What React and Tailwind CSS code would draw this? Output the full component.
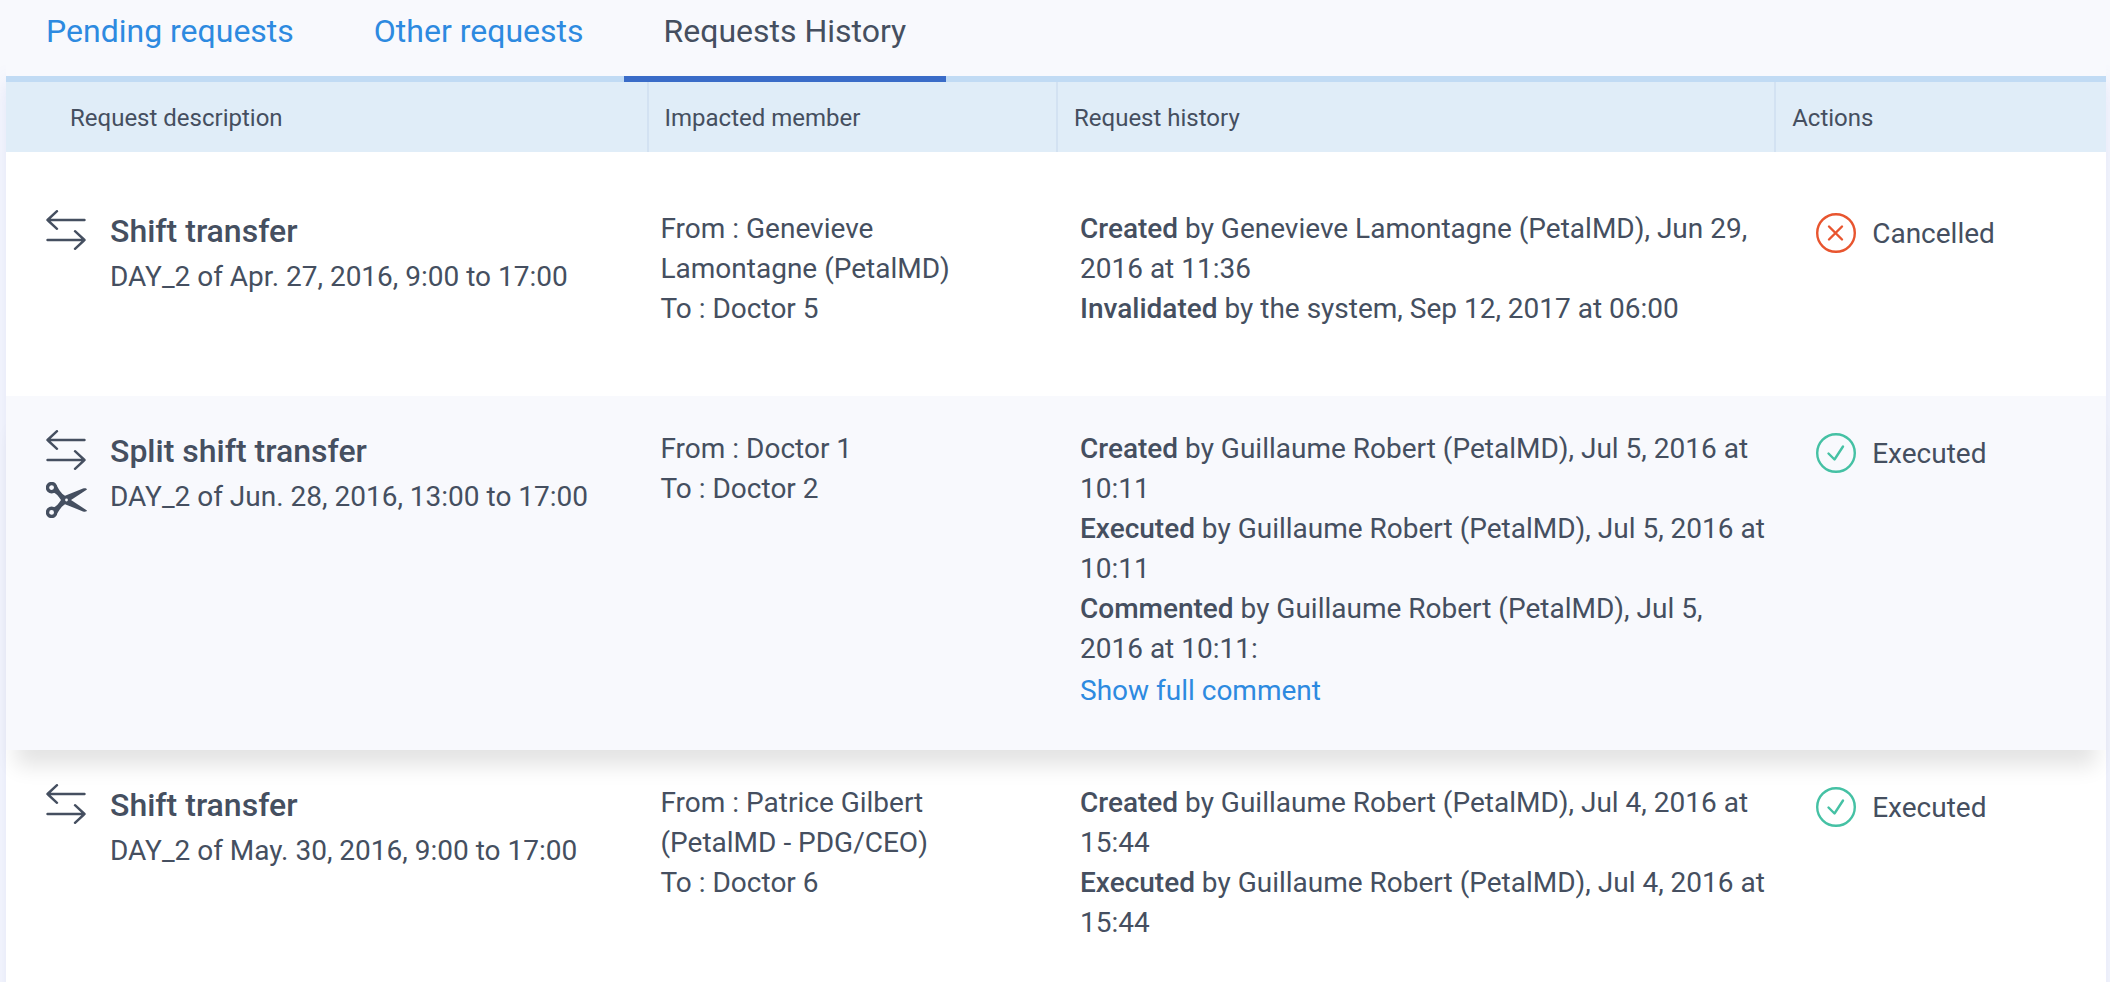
import React, { useState } from 'react';

const tabs = ['Pending requests', 'Other requests', 'Requests History'];

const requests = [
  {
    id: 1,
    title: 'Shift transfer',
    shift: 'DAY_2 of Apr. 27, 2016, 9:00 to 17:00',
    from: 'Genevieve Lamontagne (PetalMD)',
    to: 'Doctor 5',
    history: [
      { action: 'Created', text: 'by Genevieve Lamontagne (PetalMD), Jun 29, 2016 at 11:36' },
      { action: 'Invalidated', text: 'by the system, Sep 12, 2017 at 06:00' },
    ],
    status: 'Cancelled',
  },
  {
    id: 2,
    title: 'Split shift transfer',
    shift: 'DAY_2 of Jun. 28, 2016, 13:00 to 17:00',
    split: true,
    from: 'Doctor 1',
    to: 'Doctor 2',
    history: [
      { action: 'Created', text: 'by Guillaume Robert (PetalMD), Jul 5, 2016 at 10:11' },
      { action: 'Executed', text: 'by Guillaume Robert (PetalMD), Jul 5, 2016 at 10:11' },
      { action: 'Commented', text: 'by Guillaume Robert (PetalMD), Jul 5, 2016 at 10:11:' },
    ],
    hasComment: true,
    status: 'Executed',
  },
  {
    id: 3,
    title: 'Shift transfer',
    shift: 'DAY_2 of May. 30, 2016, 9:00 to 17:00',
    from: 'Patrice Gilbert (PetalMD - PDG/CEO)',
    to: 'Doctor 6',
    history: [
      { action: 'Created', text: 'by Guillaume Robert (PetalMD), Jul 4, 2016 at 15:44' },
      { action: 'Executed', text: 'by Guillaume Robert (PetalMD), Jul 4, 2016 at 15:44' },
    ],
    status: 'Executed',
  },
];

const TransferIcon = () => (
  <svg
    width="40"
    height="40"
    viewBox="0 0 40 40"
    fill="none"
    stroke="currentColor"
    strokeWidth="2.4"
    strokeLinecap="round"
    strokeLinejoin="round"
    aria-hidden="true"
  >
    <path d="M38.500 10H1.500M11 1.200L1.500 10L11 18.800" />
    <path d="M1.500 30H38.500M29 21.200L38.500 30L29 38.800" />
  </svg>
);

const ScissorsIcon = () => (
  <svg width="42" height="36" viewBox="0 0 42 36" aria-hidden="true">
    <g fill="none" stroke="currentColor" strokeWidth="3.4">
      <circle cx="5.600" cy="5.600" r="4.100" />
      <circle cx="5.600" cy="30.400" r="4.100" />
    </g>
    <path
      fill="currentColor"
      fillRule="evenodd"
      d="M10.500 3.500C12.500 6.500 15 11.500 19 13.800L37 6.600C39 6 40.500 6.300 41 7.500L25 18L41 28.500C40.500 29.700 39 30 37 29.400L19 22.200C15 24.500 12.500 29.500 10.500 32.500L6.500 26C10 25 12.800 21.500 15 18C12.800 14.500 10 11 6.500 10ZM20.500 16.600a1.400 1.400 0 1 0 0 2.800a1.400 1.400 0 1 0 0-2.800Z"
    />
  </svg>
);

const StatusIcon = ({ status }) => {
  const cancelled = status === 'Cancelled';
  return (
    <svg
      width="40"
      height="40"
      viewBox="0 0 40 40"
      fill="none"
      stroke="currentColor"
      strokeWidth="2.4"
      strokeLinecap="round"
      strokeLinejoin="round"
      className={cancelled ? 'shrink-0 text-[#e8552f]' : 'shrink-0 text-[#45c1a4]'}
      aria-hidden="true"
    >
      <circle cx="20" cy="20" r="18.800" />
      {cancelled ? (
        <path d="M13 13.500L26 26.500M26 13.500L13 26.500" />
      ) : (
        <path d="M12.500 20.500L18.500 26.500L27 13.500" />
      )}
    </svg>
  );
};

const HeaderCell = ({ children, first }) => (
  <th
    scope="col"
    className={
      first
        ? 'h-[70px] pt-0.5 pl-16 text-left text-2xl font-normal'
        : 'h-[70px] border-l-2 border-[#d3e2f2] pt-0.5 pl-4 text-left text-2xl font-normal'
    }
  >
    {children}
  </th>
);

const RequestRow = ({ request, first }) => {
  const [expanded, setExpanded] = useState(false);

  return (
    <tr
      className={
        request.split
          ? 'relative z-10 bg-[#f8f9fd] align-top shadow-[0_26px_20px_-10px_rgba(0,0,0,0.11)]'
          : 'bg-white align-top'
      }
    >
      <td className={first ? 'h-[244px] pt-[57px] pl-10' : 'h-[220px] pt-[33px] pl-10'}>
        <div className="flex gap-6">
          <div className="flex w-10 shrink-0 flex-col gap-3 pt-px">
            <TransferIcon />
            {request.split && <ScissorsIcon />}
          </div>
          <div>
            <h2 className="mb-1 text-[32px] leading-[44px] font-medium">{request.title}</h2>
            <p>{request.shift}</p>
          </div>
        </div>
      </td>
      <td className={first ? 'pt-[57px] pr-12 pl-3.5' : 'pt-[33px] pr-12 pl-3.5'}>
        <p>{`From : ${request.from}`}</p>
        <p>{`To : ${request.to}`}</p>
      </td>
      <td className={first ? 'pt-[57px] pr-2 pb-[39px] pl-6' : 'pt-[33px] pr-2 pb-[39px] pl-6'}>
        {request.history.map((entry) => (
          <p key={entry.action}>
            <strong className="font-medium">{entry.action}</strong>
            {` ${entry.text}`}
          </p>
        ))}
        {request.hasComment && (
          <button
            type="button"
            aria-expanded={expanded}
            onClick={() => setExpanded(!expanded)}
            className="mt-0.5 block cursor-pointer text-[#2d8ae0] hover:underline"
          >
            Show full comment
          </button>
        )}
      </td>
      <td className={first ? 'pt-[57px] pl-[42px]' : 'pt-[33px] pl-[42px]'}>
        <div className="flex items-center gap-4 pt-[3px]">
          <StatusIcon status={request.status} />
          <span className="pt-0.5">{request.status}</span>
        </div>
      </td>
    </tr>
  );
};

const App = () => {
  const [activeTab, setActiveTab] = useState('Requests History');

  return (
    <div className="h-screen overflow-hidden bg-[#f8f9fd] pr-1 pl-1.5 font-[Roboto,sans-serif] text-[28px] leading-10 text-[#454f60]">
      <nav className="relative z-10 flex border-b-6 border-[#c1dbf4] bg-[#f8f9fd]" role="tablist">
        {tabs.map((tab) => (
          <button
            key={tab}
            type="button"
            role="tab"
            aria-selected={tab === activeTab}
            onClick={() => setActiveTab(tab)}
            className={
              tab === activeTab
                ? '-mb-1.5 cursor-pointer border-b-6 border-[#3a6cc8] px-10 pt-[11px] pb-[25px] text-[32px]'
                : 'cursor-pointer px-10 pt-[11px] pb-[25px] text-[32px] text-[#2d8ae0]'
            }
          >
            {tab}
          </button>
        ))}
      </nav>
      <main className="min-h-screen bg-white shadow-[0_0_20px_rgba(90,110,220,0.15)]">
        <table className="w-full table-fixed border-separate border-spacing-0">
          <colgroup>
            <col className="w-[30.5%]" />
            <col className="w-[19.5%]" />
            <col className="w-[34.2%]" />
            <col />
          </colgroup>
          <thead className="bg-[#e0edf8]">
            <tr>
              <HeaderCell first>Request description</HeaderCell>
              <HeaderCell>Impacted member</HeaderCell>
              <HeaderCell>Request history</HeaderCell>
              <HeaderCell>Actions</HeaderCell>
            </tr>
          </thead>
          <tbody>
            {requests.map((request, index) => (
              <RequestRow key={request.id} request={request} first={index === 0} />
            ))}
          </tbody>
        </table>
      </main>
    </div>
  );
};

export default App;
